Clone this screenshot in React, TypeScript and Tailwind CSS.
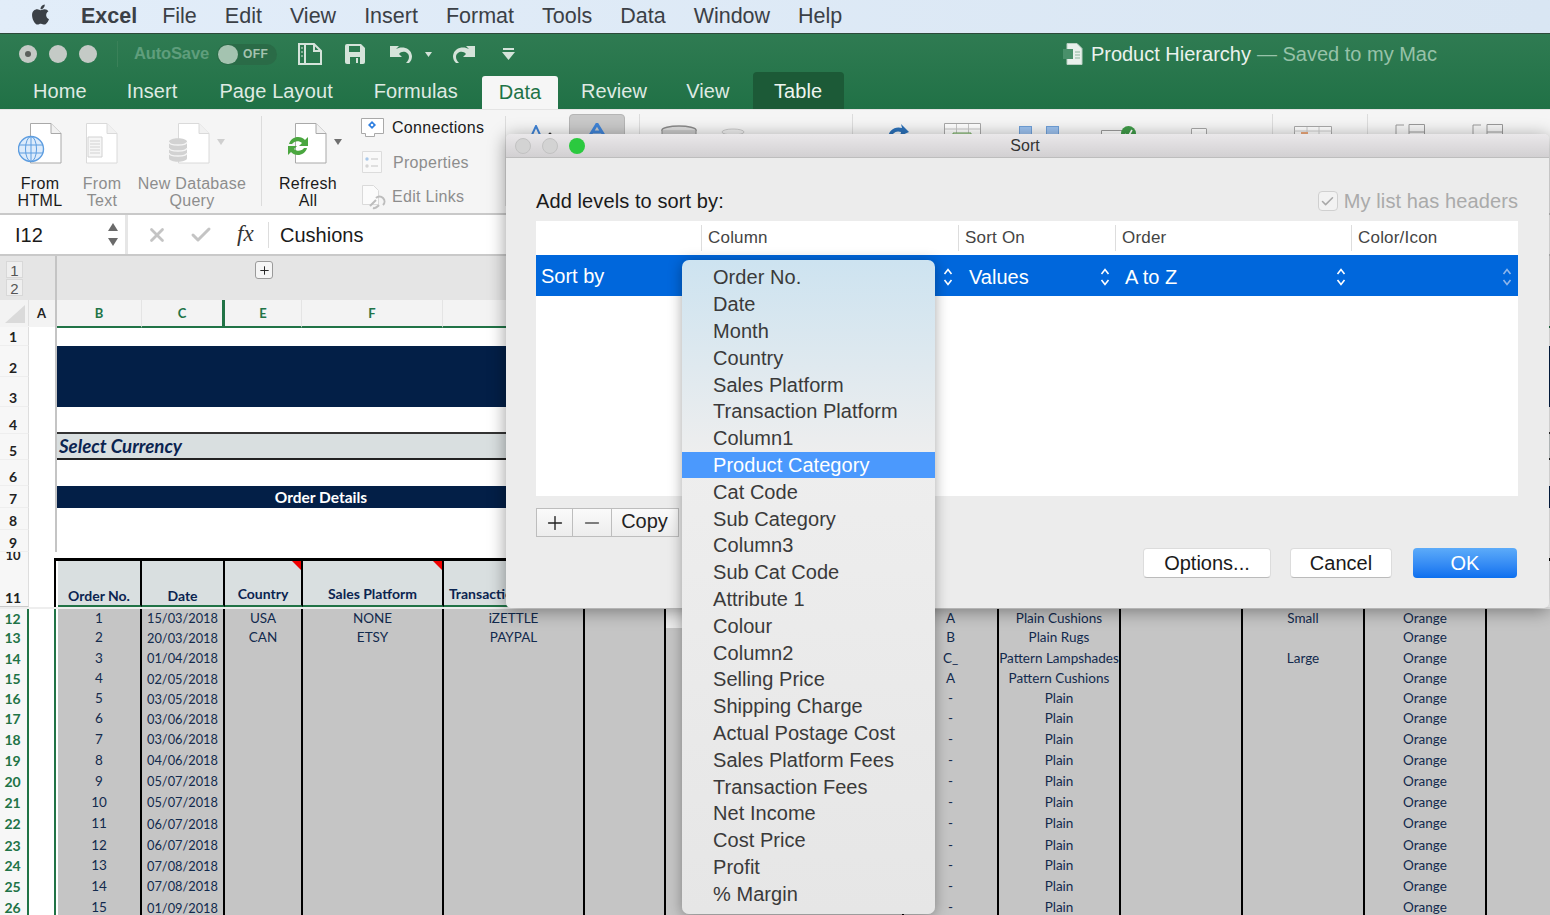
import React from "react";
import { FaApple } from "react-icons/fa";
import { Check, X, Plus, Minus } from "lucide-react";

const SANS = "font-['Liberation_Sans',Arial,sans-serif]";
const G = "grid grid-cols-[29px_29px_84px_83px_78px_141px_141px_81px_119px_119px_95px_122px_122px_122px_122px_1fr]";
const GH = "grid grid-cols-[29px_28px_84px_84px_76px_141px_141px_81px_119px_119px_95px_122px_122px_122px_122px_1fr]";

const menu = ["File", "Edit", "View", "Insert", "Format", "Tools", "Data", "Window", "Help"];
const tabs: [string, string][] = [
  ["Home", "ml-[33px]"], ["Insert", "ml-[40px]"], ["Page Layout", "ml-[42px]"], ["Formulas", "ml-[41px]"],
];
const columns = ["Order No.", "Date", "Month", "Country", "Sales Platform", "Transaction Platform", "Column1", "Product Category", "Cat Code", "Sub Category", "Column3", "Sub Cat Code", "Attribute 1", "Colour", "Column2", "Selling Price", "Shipping Charge", "Actual Postage Cost", "Sales Platform Fees", "Transaction Fees", "Net Income", "Cost Price", "Profit", "% Margin"];

const topRows: { n: string; h: number; kind: string }[] = [
  { n: "1", h: 19, kind: "white" },
  { n: "2", h: 31, kind: "navy" },
  { n: "3", h: 30, kind: "navy" },
  { n: "4", h: 27, kind: "line" },
  { n: "5", h: 26, kind: "currency" },
  { n: "6", h: 26, kind: "white" },
  { n: "7", h: 22, kind: "order" },
  { n: "8", h: 22, kind: "white" },
  { n: "9", h: 22, kind: "white" },
];

const data: [number, number, string, string, string, string, string, string, string][] = [
  [12, 19, "15/03/2018", "USA", "NONE", "iZETTLE", "A", "Plain Cushions", "Small"],
  [13, 20, "20/03/2018", "CAN", "ETSY", "PAYPAL", "B", "Plain Rugs", ""],
  [14, 21, "01/04/2018", "", "", "", "C_", "Pattern Lampshades", "Large"],
  [15, 20, "02/05/2018", "", "", "", "A", "Pattern Cushions", ""],
  [16, 20, "03/05/2018", "", "", "", "-", "Plain", ""],
  [17, 20, "03/06/2018", "", "", "", "-", "Plain", ""],
  [18, 21, "03/06/2018", "", "", "", "-", "Plain", ""],
  [19, 21, "04/06/2018", "", "", "", "-", "Plain", ""],
  [20, 21, "05/07/2018", "", "", "", "-", "Plain", ""],
  [21, 21, "05/07/2018", "", "", "", "-", "Plain", ""],
  [22, 22, "06/07/2018", "", "", "", "-", "Plain", ""],
  [23, 21, "06/07/2018", "", "", "", "-", "Plain", ""],
  [24, 20, "07/08/2018", "", "", "", "-", "Plain", ""],
  [25, 21, "07/08/2018", "", "", "", "-", "Plain", ""],
  [26, 22, "01/09/2018", "", "", "", "-", "Plain", ""],
];

function Updown({ dim }: { dim?: boolean }) {
  return (
    <svg width="10" height="20" viewBox="0 0 10 20" fill="none" stroke={dim ? "#8fb6ea" : "#fff"} strokeWidth="1.6" className="shrink-0">
      <path d="M1.5 7 5 2.5 8.500 7M1.500 13 5 17.500 8.500 13" />
    </svg>
  );
}

function DocShape({ stroke, x = 0 }: { stroke: string; x?: number }) {
  return (
    <g transform={`translate(${x} 0)`} fill="#fff" stroke={stroke} strokeWidth="1">
      <path d="M.5.5H21L31 10.500V40H.5z" />
      <path d="M21 .5V10.500H31" fill="#f1f1f1" />
    </g>
  );
}

function Rbtn({ w, icon, lines, dim }: { w: string; icon: React.ReactNode; lines: string[]; dim?: boolean }) {
  return (
    <div className={`${w} shrink-0 flex flex-col items-center pt-[13px] text-[16px] leading-[17px] tracking-[0.3px] ${dim ? "text-[#8d8d8d]" : "text-[#1a1a1a]"}`}>
      <div className="h-[52px]">{icon}</div>
      {lines.map((l) => <div key={l} className="whitespace-nowrap">{l}</div>)}
    </div>
  );
}

function RibbonSep({ ml }: { ml: string }) {
  return <div className={`${ml} w-px h-[90px] mt-[6px] bg-[#dcdcdc] shrink-0`} />;
}

function Corner() {
  return (
    <svg width="9" height="9" viewBox="0 0 9 9" className="absolute top-0 right-0"><path d="M0 0h9v9z" fill="#f00000" /></svg>
  );
}

export default function App() {
  return (
    <div className={`${SANS} relative w-[1550px] h-[915px] overflow-hidden bg-white`}>
      {/* mac menu bar */}
      <div className="h-[33px] bg-gradient-to-r from-[#e2edf9] to-[#d9e6f3] flex items-center text-[#3b4046] text-[21.500px] pb-[1px]">
        <FaApple className="ml-[29px] text-[23px] text-[#3b4046] mb-[4px]" />
        <span className="ml-[29px] font-bold">Excel</span>
        <div className="ml-[25px] flex gap-[28px]">
          {menu.map((m) => <span key={m}>{m}</span>)}
        </div>
      </div>

      {/* title + tabs */}
      <div className="h-[76px] bg-gradient-to-b from-[#2f7b52] to-[#207146] border-t border-[#2c4a3a] flex flex-col">
        <div className="h-[38px] flex items-center mt-[2px] relative">
          <div className="ml-[19px] w-[18px] h-[18px] rounded-full bg-[#c4cac6] flex items-center justify-center"><div className="w-[6px] h-[6px] rounded-full bg-[#5a5f5c]" /></div>
          <div className="ml-[12px] w-[18px] h-[18px] rounded-full bg-[#c4cac6]" />
          <div className="ml-[12px] w-[18px] h-[18px] rounded-full bg-[#c4cac6]" />
          <div className="ml-[20px] w-px h-[26px] bg-[#3a8159]" />
          <span className="ml-[16px] text-[16.600px] font-bold text-[#5f9e7c] tracking-[-0.2px]">AutoSave</span>
          <div className="ml-[8px] w-[60px] h-[21px] rounded-full bg-[#2a6b47] flex items-center">
            <div className="w-[20px] h-[19px] rounded-full bg-[#a4c3b0] ml-px" />
            <span className="ml-[5px] text-[12px] font-bold text-[#a4c3b0] tracking-[0.5px]">OFF</span>
          </div>
          <svg className="ml-[21px]" width="24" height="22" viewBox="0 0 24 22" fill="none" stroke="#d5e3da" strokeWidth="2"><path d="M1 1h15l7 7v13H1zM7 1v20M16 1v7h7" /><path d="M3.500 5h1M3.500 9h1M3.500 13h1" /></svg>
          <svg className="ml-[22px]" width="22" height="22" viewBox="0 0 22 22"><path d="M1 3a2 2 0 012-2h14l4 4v14a2 2 0 01-2 2H3a2 2 0 01-2-2z" fill="#d5e3da" /><path d="M5 3h11v6H5z" fill="#2c7a50" /><path d="M6 14h10v7H6z" fill="#2c7a50" /><path d="M12 15h2v5h-2z" fill="#d5e3da" /></svg>
          <svg className="ml-[24px]" width="23" height="18" viewBox="0 0 23 18"><path d="M0 1l9 0-3 3c5-3 15-2 16 7 0 3-1 5-3 7h-3c2-2 3-4 3-6 0-5-7-7-10-3l3 3H0z" fill="#d5e3da" /></svg>
          <svg className="ml-[12px]" width="7" height="5" viewBox="0 0 7 5"><path d="M0 0h7L3.500 5z" fill="#d5e3da" /></svg>
          <svg className="ml-[20px]" width="23" height="18" viewBox="0 0 23 18"><path d="M23 1l-9 0 3 3C12 1 2 2 1 11c0 3 1 5 3 7h3c-2-2-3-4-3-6 0-5 7-7 10-3l-3 3h12z" fill="#d5e3da" /></svg>
          <svg className="ml-[27px]" width="13" height="12" viewBox="0 0 13 12"><path d="M1 1h11" stroke="#d5e3da" strokeWidth="2" /><path d="M0 4h13L6.500 12z" fill="#d5e3da" /></svg>
          <div className="ml-auto mr-[113px] flex items-center text-[20px]">
            <svg width="20" height="22" viewBox="0 0 20 22" className="mr-[8px]"><path d="M4 .5h10l5 5v16H4z" fill="#e9f0ec" stroke="#b9cfc2" /><path d="M0 6h10v10H0z" fill="#49906a" /><path d="M12 9h5M12 12h5M12 15h5" stroke="#8db59d" /></svg>
            <span className="text-[#eaf2ed]">Product Hierarchy</span>
            <span className="text-[#97c2a9] ml-[6px]">— Saved to my Mac</span>
          </div>
        </div>
        <div className="flex-1 flex items-end text-[20px] text-[#dfeae3] tracking-[0.1px]">
          {tabs.map(([t, m]) => <span key={t} className={`${m} h-[33px] leading-[30px]`}>{t}</span>)}
          <span className="ml-[24px] w-[76px] h-[33px] bg-[#f6f6f6] rounded-t-[3px] text-[#1f7346] flex items-center justify-center pb-[2px]">Data</span>
          <span className="ml-[23px] h-[33px] leading-[30px]">Review</span>
          <span className="ml-[39px] h-[33px] leading-[30px]">View</span>
          <span className="ml-[23px] w-[91px] h-[37px] bg-[#1c5a37] rounded-t-[4px] text-[#eef5f0] flex items-center justify-center">Table</span>
        </div>
      </div>

      {/* ribbon */}
      <div className="h-[104px] bg-[#f5f5f5] flex items-start overflow-hidden border-t border-[#e4e4e4]">
        <Rbtn w="w-[80px]" lines={["From", "HTML"]} icon={
          <svg width="46" height="42" viewBox="0 0 46 42" className="ml-[2px]">
            <DocShape stroke="#a9a9a9" x={12} />
            <circle cx="13" cy="26" r="12.500" fill="#dcebfb" stroke="#5d9de0" strokeWidth="1.400" />
            <ellipse cx="13" cy="26" rx="5.500" ry="12.500" fill="none" stroke="#5d9de0" />
            <path d="M1 22h24M1 30h24M13 13v26" stroke="#5d9de0" />
          </svg>} />
        <Rbtn w="w-[44px]" dim lines={["From", "Text"]} icon={
          <svg width="32" height="42" viewBox="0 0 32 42">
            <DocShape stroke="#dadada" />
            <path d="M2 14h14v20H2z" fill="#f6f6f6" stroke="#d2d2d2" />
            <path d="M4 18h10M4 21h10M4 24h10M4 27h10M4 30h10" stroke="#d2d2d2" />
          </svg>} />
        <Rbtn w="w-[136px]" dim lines={["New Database", "Query"]} icon={
          <div className="relative">
            <svg width="42" height="42" viewBox="0 0 42 42" className="ml-[-6px]">
              <DocShape stroke="#dadada" x={10} />
              <path d="M1 19c0-5 18-5 18 0v16c0 5-18 5-18 0z" fill="#d2d2d2" />
              <path d="M1 19c0 4 18 4 18 0M1 25c0 4 18 4 18 0M1 30c0 4 18 4 18 0" fill="none" stroke="#f4f4f4" strokeWidth="1.300" />
            </svg>
            <svg className="absolute top-[16px] left-[43px]" width="8" height="6" viewBox="0 0 8 6"><path d="M0 0h8L4 6z" fill="#cfcfcf" /></svg>
          </div>} />
        <RibbonSep ml="ml-px" />
        <Rbtn w="w-[92px]" lines={["Refresh", "All"]} icon={
          <div className="relative">
            <svg width="42" height="42" viewBox="0 0 42 42">
              <DocShape stroke="#a9a9a9" x={8} />
              <path d="M2 21c2-8 12-9 16-4l3-3v9h-9l3-3c-3-3-8-2-10 1zM20 25c-2 8-12 9-16 4l-3 3v-9h9l-3 3c3 3 8 2 10-1z" fill="#4aa63f" />
            </svg>
            <svg className="absolute top-[16px] left-[47px]" width="8" height="6" viewBox="0 0 8 6"><path d="M0 0h8L4 6z" fill="#6f6f6f" /></svg>
          </div>} />
        <div className="w-[152px] shrink-0 pl-[7px] pt-[1px] flex flex-col text-[16px] tracking-[0.3px]">
          <div className="h-[34px] flex items-center gap-[8px] text-[#1a1a1a]">
            <svg width="23" height="21" viewBox="0 0 23 21"><path d="M.5.5h22v15h-9v3h-9v-3h-4z" fill="#fff" stroke="#a9a9a9" /><path d="M11 3l4 4-4 4-4-4z" fill="#2f7fe0" /><circle cx="11" cy="7" r="1.300" fill="#fff" /></svg>
            Connections
          </div>
          <div className="h-[35px] flex items-center gap-[8px] text-[#8d8d8d]">
            <svg width="23" height="23" viewBox="0 0 23 23" className="ml-px"><path d="M.5.5h19v21H.5z" fill="#f9f9f9" stroke="#dcdcdc" /><circle cx="5" cy="8" r="1.700" fill="#a9c8ea" /><circle cx="5" cy="15" r="1.700" fill="#d5d5d5" /><path d="M9 8h7M9 15h7" stroke="#c5c5c5" /></svg>
            Properties
          </div>
          <div className="h-[34px] flex items-center gap-[5px] text-[#8d8d8d]">
            <svg width="25" height="25" viewBox="0 0 25 25" className="ml-px"><path d="M.5.5h11l5 5v14H.5z" fill="#fbfbfb" stroke="#dadada" /><path d="M8 21l6-6M11 23c3 1 4-1 6-3M14 13c2-2 5-2 7 0s2 5 0 7" fill="none" stroke="#bdbdbd" strokeWidth="2" /></svg>
            Edit Links
          </div>
        </div>
        <RibbonSep ml="ml-[-1px]" />
        {/* tools mostly hidden by the dialog */}
        <div className="flex items-start pt-[4px]">
          <svg className="ml-[23px] mt-[11px]" width="25" height="12" viewBox="0 0 25 12"><path d="M2 12L7 1l5 11" fill="none" stroke="#3f83d6" strokeWidth="2" /><circle cx="21" cy="9" r="1.500" fill="#333" /></svg>
          <div className="ml-[15px] w-[56px] h-[30px] bg-[#c9c9c9] border border-[#b5b5b5] rounded-[4px] flex justify-center pt-[8px]">
            <svg width="20" height="14" viewBox="0 0 20 14"><path d="M2 14L10 1l8 13M6 9h8" fill="none" stroke="#3f83d6" strokeWidth="3" /></svg>
          </div>
          <div className="ml-[14px] w-px h-[28px] bg-[#dcdcdc]" />
          <svg className="ml-[21px] mt-[11px]" width="36" height="14" viewBox="0 0 36 14"><ellipse cx="18" cy="5" rx="17" ry="4" fill="#ddd" stroke="#8a8a8a" strokeWidth="1.500" /><path d="M1 5v9h34V5" fill="#c8c8c8" stroke="#8a8a8a" /></svg>
          <svg className="ml-[24px] mt-[14px]" width="24" height="10" viewBox="0 0 24 10"><ellipse cx="12" cy="4" rx="11" ry="3" fill="#eee" stroke="#c9c9c9" /><path d="M3 6l3 4h12l3-4" fill="#e3e3e3" /></svg>
          <div className="ml-[107px] w-px h-[28px] bg-[#dcdcdc]" />
          <svg className="ml-[34px] mt-[9px]" width="22" height="16" viewBox="0 0 22 16"><path d="M1 16C1 7 8 3 15 5l-1-4 8 8-9 4 1-4C9 7 5 10 4 16z" fill="#2b70b8" /></svg>
          <svg className="ml-[35px] mt-[9px]" width="37" height="16" viewBox="0 0 37 16"><path d="M.5.5h36v15H.5z" fill="#fff" stroke="#a8a8a8" /><path d="M12.500 1v14M24.500 1v14M1 6h35" stroke="#c9c9c9" /><path d="M9 10h18v6H9z" fill="#cfe3c5" stroke="#6ea85a" /></svg>
          <div className="ml-[38px] mt-[12px] w-[40px] flex justify-between">
            <div className="w-[13px] h-[14px] bg-[#9cc1ee] border border-[#6f9fd8]" />
            <div className="w-[13px] h-[14px] bg-[#9cc1ee] border border-[#6f9fd8]" />
          </div>
          <svg className="ml-[42px] mt-[12px]" width="35" height="14" viewBox="0 0 35 14"><path d="M.5 4.500h22v10H.5z" fill="#fff" stroke="#9a9a9a" /><circle cx="27.500" cy="7.500" r="7.500" fill="#3f9a48" /><path d="M24 8l3 3 4-7" fill="none" stroke="#fff" strokeWidth="1.600" /></svg>
          <div className="ml-[55px] mt-[14px] w-[16px] h-[12px] bg-white border border-[#a8a8a8] rounded-[1px]" />
          <div className="ml-[65px] w-px h-[28px] bg-[#dcdcdc]" />
          <svg className="ml-[21px] mt-[12px]" width="38" height="14" viewBox="0 0 38 14"><path d="M.5.5h37v13H.5z" fill="#fff" stroke="#aaa" /><path d="M.5 5h37M13 1v13M25 1v13" stroke="#ccc" /><path d="M7 6h7v8H7z" fill="#eea97b" /></svg>
          <div className="ml-[35px] w-px h-[28px] bg-[#dcdcdc]" />
          <svg className="ml-[27px] mt-[10px]" width="30" height="16" viewBox="0 0 30 16" fill="none" stroke="#9a9a9a"><path d="M1 16V1h8" /><path d="M14 .5h15.500V16H14zM14 8h15" /></svg>
          <svg className="ml-[47px] mt-[10px]" width="31" height="16" viewBox="0 0 31 16" fill="none" stroke="#9a9a9a"><path d="M1 16V1h8" /><path d="M15 .5h15.500V16H15zM15 8h15" /></svg>
        </div>
      </div>

      {/* formula bar */}
      <div className="h-[43px] flex border-y-2 border-[#c9c9c9] bg-[#e6e6e6] text-[20px] text-[#1a1a1a]">
        <div className="w-[125px] bg-white flex items-center pl-[15px] justify-between pr-[6px]">
          <span>I12</span>
          <svg width="12" height="26" viewBox="0 0 12 26"><path d="M1 9h10L6 1zM1 16h10l-5 8z" fill="#6a6a6a" /></svg>
        </div>
        <div className="ml-[3px] flex-1 bg-white flex items-center">
          <X className="ml-[18px] text-[#c4c4c4]" size={22} strokeWidth={3} />
          <Check className="ml-[21px] text-[#c4c4c4]" size={24} strokeWidth={3} />
          <span className="ml-[24px] w-[26px] font-['Liberation_Serif',serif] italic text-[23px] text-[#333]">fx</span>
          <div className="ml-[5px] w-px h-[26px] bg-[#dddddd]" />
          <span className="ml-[11px]">Cushions</span>
        </div>
      </div>

      {/* outline band */}
      <div className="h-[44px] bg-[#e5e5e5] flex">
        <div className="w-[57px] border-r-2 border-[#c4c4c4] flex flex-col pl-[6px] pt-[5px] gap-px text-[15px] leading-[17px] text-[#555]">
          <div className="w-[17px] h-[17px] bg-[#efefef] border border-[#d8d8d8] text-center">1</div>
          <div className="w-[17px] h-[17px] bg-[#efefef] border border-[#d8d8d8] text-center">2</div>
        </div>
        <div className="ml-[198px] mt-[5px] w-[18px] h-[18px] bg-[#f5f5f5] border border-[#9a9a9a] rounded-[3px] flex items-center justify-center">
          <Plus size={13} strokeWidth={1.800} className="text-[#222]" />
        </div>
      </div>

      {/* sheet */}
      <div className="font-['Lato',sans-serif] text-[13.500px] text-[#122a4d]">
        {/* column letters */}
        <div className={`${GH} h-[27px] bg-[#f3f3f3] text-[13px] font-bold text-[#217346] leading-[26px]`}>
          <div className="border-r border-[#e0e0e0] flex items-end justify-end pr-[3px] pb-[3px] h-[26px]">
            <svg width="20" height="18" viewBox="0 0 20 18"><path d="M20 0v18H0z" fill="#dadada" /></svg>
          </div>
          <div className="h-[27px] border-r-2 border-[#c4c4c4] text-center text-[#222] pr-px">A</div>
          <div className="border-b-2 border-[#217346] text-center">B</div>
          <div className="border-b-2 border-l border-b-[#217346] border-l-[#e4e4e4] border-r-[3px] border-r-[#217346] text-center">C</div>
          <div className="border-b-2 border-[#217346] text-center">E</div>
          <div className="border-b-2 border-b-[#217346] border-l border-l-[#e4e4e4] text-center">F</div>
          {Array.from({ length: 10 }).map((_, i) => <div key={i} className="border-b-2 border-b-[#217346] border-l border-l-[#e4e4e4]" />)}
        </div>

        {topRows.map((r) => (
          <div key={r.n} style={{ height: r.h }} className="flex">
            <div className="w-[29px] shrink-0 bg-[#f7f7f7] border-r border-[#dedede] border-b border-b-[#eeeeee] text-center pr-[2px] font-bold text-[14px] leading-[17px] text-[#222] flex items-end justify-center">{r.n}</div>
            <div className="w-[28px] shrink-0 border-r-2 border-[#c4c4c4]" />
            {r.kind === "white" && <div className="flex-1" />}
            {r.kind === "navy" && <div className="flex-1 bg-[#031f47]" />}
            {r.kind === "line" && <div className="flex-1 border-b-2 border-[#333]" />}
            {r.kind === "currency" && <div className="flex-1 bg-[#d9dfe0] border-b-2 border-[#222] pl-[2px] font-bold italic text-[18.700px] leading-[24px] text-[#0b2450]">Select Currency</div>}
            {r.kind === "order" && <div className="flex-1 bg-[#031f47] text-white font-bold text-[15.500px] leading-[22px]"><div className="w-[528px] text-center">Order Details</div></div>}
          </div>
        ))}

        {/* row 10, squeezed */}
        <div className="h-[9px] flex">
          <div className="w-[29px] shrink-0 bg-[#f7f7f7] border-r border-[#dedede] overflow-hidden text-center pr-[2px] font-bold text-[13px] leading-[6px] text-[#222]">10</div>
          <div className="w-[25px] shrink-0" />
          <div className="flex-1 border-b-[3px] border-black" />
        </div>

        {/* row 11 */}
        <div className={`${G} h-[46px]`}>
          <div className="bg-[#f7f7f7] border-r border-[#dedede] border-b border-b-[#c9c9c9] flex items-end justify-center pr-[2px] font-bold text-[14px] leading-[17px] text-[#222]">11</div>
          <div className="mr-[2px] border-r-2 border-black" />
          {["Order No.", "Date", "Country", "Sales Platform", "Transaction Platform"].map((t, i) => (
            <div key={t} className={`relative bg-[#d9dfe0] border-r-2 border-black border-b-2 border-b-[#217346] flex items-end justify-center font-bold text-[14px] whitespace-nowrap overflow-hidden text-[#0b2450] leading-[18px] ${i < 2 ? "pb-0" : "pb-[2px]"}`}>
              {t}
              {(i === 2 || i === 3) && <Corner />}
            </div>
          ))}
        </div>

        {/* data rows */}
        <div className="h-[2px] bg-[#eeeeee]" />
        {data.map(([n, h, date, c, p, t, cat, prod, size], i) => (
          <div key={n} style={{ height: h }} className={`${G} leading-none [&>div]:flex [&>div]:items-center [&>div]:justify-center`}>
            <div className="bg-[#f7f7f7] border-r-2 border-[#217346] text-[#217346] font-bold text-[14px] pr-[2px]">{n}</div>
            <div className="mr-[2px] border-r-2 border-[#217346]" />
            {[String(i + 1), date, c, p, t, "", "", "", cat, prod, "", size, "Orange"].map((v, k) => (
              <div key={k} className={`${n === 12 && k === 6 ? "bg-[#ececec]" : "bg-[#c5c5c5]"} ${k === 6 ? "" : "border-r-2 border-black"} ${k === 1 ? "text-[12.800px]" : ""} whitespace-nowrap`}>{v}</div>
            ))}
            <div className="bg-[#c5c5c5]" />
          </div>
        ))}
      </div>

      {/* sort dialog */}
      <div className="absolute left-[506px] top-[134px] w-[1043px] h-[474px] rounded-[5px] bg-[#ececec] shadow-[0_3px_18px_rgba(0,0,0,0.4)] flex flex-col">
        <div className="h-[24px] shrink-0 rounded-t-[5px] bg-gradient-to-b from-[#eae8ea] to-[#d2d0d2] border-b border-[#bdbdbd] flex items-center relative">
          <div className="ml-[9px] w-[16px] h-[16px] rounded-full bg-[#d3d3d3] border border-[#c2c2c2]" />
          <div className="ml-[11px] w-[16px] h-[16px] rounded-full bg-[#d3d3d3] border border-[#c2c2c2]" />
          <div className="ml-[11px] w-[16px] h-[16px] rounded-full bg-[#2bc93f]" />
          <span className="absolute left-0 right-0 text-center text-[16px] text-[#333] pr-[5px] pointer-events-none">Sort</span>
        </div>
        <div className="pl-[30px] pr-[31px] flex-1 flex flex-col">
          <div className="mt-[30px] mb-[1px] h-[26px] flex items-center justify-between text-[20px] tracking-[0.1px]">
            <span className="text-[#1a1a1a]">Add levels to sort by:</span>
            <span className="flex items-center text-[#aaaaaa] gap-[6px]">
              <span className="w-[20px] h-[20px] rounded-[4px] border border-[#d0d0d0] bg-[#f2f2f2] flex items-center justify-center">
                <Check size={15} strokeWidth={2.500} className="text-[#a8a8a8]" />
              </span>
              My list has headers
            </span>
          </div>
          <div className="mt-[6px] h-[275px] bg-white shrink-0 flex flex-col">
            <div className="h-[34px] grid grid-cols-[165px_257px_157px_236px_167px] text-[17px] text-[#444] items-center tracking-[0.2px]">
              <div />
              {["Column", "Sort On", "Order", "Color/Icon"].map((h) => (
                <div key={h} className="border-l border-[#dddddd] pl-[6px] h-[26px] leading-[26px]">{h}</div>
              ))}
            </div>
            <div className="h-[41px] bg-[#0067dc] grid grid-cols-[165px_257px_157px_236px_167px] items-center text-white text-[20px]">
              <span className="pl-[5px]">Sort by</span>
              <span className="flex justify-end pr-[5px] pt-[2px]"><Updown /></span>
              <span className="flex justify-between pl-[11px] pr-[5px] pt-[2px] items-center">Values<Updown /></span>
              <span className="flex justify-between pl-[10px] pr-[5px] pt-[2px] items-center">A to Z<Updown /></span>
              <span className="flex justify-end pr-[6px] pt-[2px]"><Updown dim /></span>
            </div>
          </div>
          <div className="mt-[12px] flex w-[143px] h-[29px] border border-[#bdbdbd] bg-gradient-to-b from-[#fafafa] to-[#ededed] text-[20px] text-[#222] shrink-0">
            <div className="w-[36px] flex items-center justify-center border-r border-[#bdbdbd]"><Plus size={22} strokeWidth={1.500} /></div>
            <div className="w-[39px] flex items-center justify-center border-r border-[#bdbdbd]"><Minus size={22} strokeWidth={1.500} className="text-[#555]" /></div>
            <div className="flex-1 flex items-center justify-center pr-px pb-[3px]">Copy</div>
          </div>
          <div className="mt-[11px] flex justify-end pr-[1px] text-[20px] text-[#1a1a1a]">
            <div className="w-[128px] h-[30px] bg-white rounded-[4px] border border-[#dcdcdc] border-b-[#bbbbbb] flex items-center justify-center">Options...</div>
            <div className="ml-[19px] w-[102px] h-[30px] bg-white rounded-[4px] border border-[#dcdcdc] border-b-[#bbbbbb] flex items-center justify-center">Cancel</div>
            <div className="ml-[21px] w-[104px] h-[30px] rounded-[4px] bg-gradient-to-b from-[#5cabf9] to-[#0a6fef] text-white flex items-center justify-center">OK</div>
          </div>
        </div>
      </div>

      {/* open column list */}
      <div className="absolute left-[682px] top-[260px] w-[253px] h-[654px] rounded-[7px] bg-gradient-to-b from-[#cde3f0] via-[#eeeeee] via-30% to-[#e6e6e6] shadow-[0_2px_14px_rgba(0,0,0,0.35)] py-[4px] text-[20px] text-[#3a3a3a] tracking-[0.05px]">
        {columns.map((c) => (
          <div key={c} className={`h-[26.800px] pl-[31px] flex items-center ${c === "Product Category" ? "bg-[#4b99fd] text-white" : ""}`}>{c}</div>
        ))}
      </div>
    </div>
  );
}
